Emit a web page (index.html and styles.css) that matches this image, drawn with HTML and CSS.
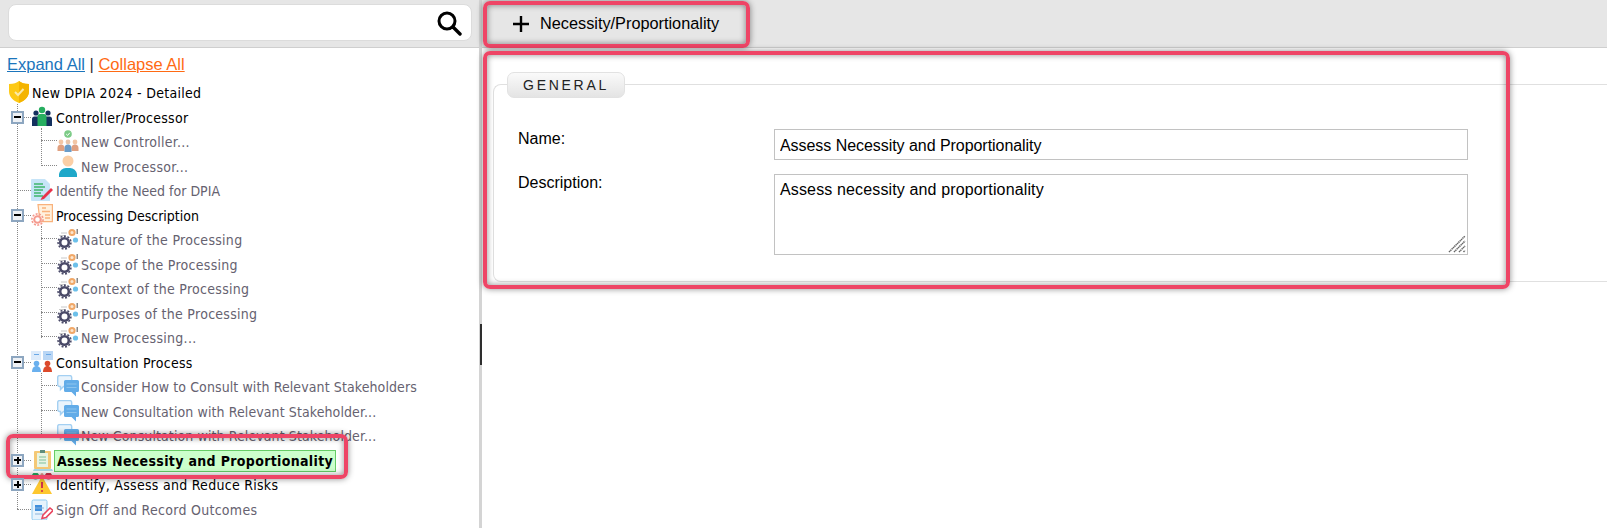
FILE: index.html
```html
<!DOCTYPE html>
<html lang="en">
<head>
<meta charset="utf-8">
<title>New DPIA 2024 - Detailed</title>
<link rel="stylesheet" href="styles.css">
</head>
<body>
<svg class="defs" width="0" height="0" aria-hidden="true">
  <defs>
    <symbol id="i-gear" viewBox="0 0 22 22">
      <circle cx="7.500" cy="14.500" r="4.300" fill="none" stroke="#4a4a68" stroke-width="2.600"/>
      <circle cx="7.500" cy="14.500" r="6.400" fill="none" stroke="#4a4a68" stroke-width="1.600" stroke-dasharray="2 1.600"/>
      <circle cx="15" cy="4.500" r="2.600" fill="#fbe6d0" stroke="#f0a868" stroke-width="2"/>
      <circle cx="18.500" cy="12" r="2.600" fill="#6cc0ea"/>
      <rect x="19.500" y="1" width="1.500" height="5" fill="#888"/>
      <path d="M4 5h6M2 7.500h5" stroke="#c8c8c8" stroke-width="1"/>
    </symbol>
    <symbol id="i-chat" viewBox="0 0 22 22">
      <path d="M.7 2.500a2 2 0 0 1 2-2h10a2 2 0 0 1 2 2v7a2 2 0 0 1-2 2H6.500l-3 3v-3h-.8a2 2 0 0 1-2-2z" fill="#eaf4fc" stroke="#a4d0f2" stroke-width="1.400"/>
      <path d="M7 6.500A1.500 1.500 0 0 1 8.500 5h12A1.500 1.500 0 0 1 22 6.500v9a1.500 1.500 0 0 1-1.500 1.500H19v4.500L14.500 17h-6A1.500 1.500 0 0 1 7 15.500z" fill="#62ace8"/>
      <path d="M9.500 9h10M9.500 12.500h10" stroke="#8cc4ee" stroke-width="1"/>
    </symbol>
  </defs>
</svg>

<div class="app">
  <aside class="side">
    <div class="searchbar">
      <div class="search">
        <svg class="lens" viewBox="0 0 26 26"><circle cx="11" cy="11" r="8" fill="none" stroke="#000" stroke-width="3"/><path d="M17 17l7 7" stroke="#000" stroke-width="3.400" stroke-linecap="round"/></svg>
      </div>
    </div>
    <div class="links"><a class="expand" href="#">Expand All</a> | <a class="collapse" href="#">Collapse All</a></div>
    <div class="tree">
      <div class="row root">
        <svg class="icon" viewBox="0 0 22 22"><path d="M11 0c2.500 2 5 3 10 3v7c0 6-4 9.500-10 12C5 19.500 1 16 1 10V3c5 0 7.500-1 10-3z" fill="#fdc915"/><path d="M11 0c2.500 2 5 3 10 3v7c0 6-4 9.500-10 12z" fill="#f4b400"/><path d="M7 11l3 3 5.500-6" fill="none" stroke="#fbe9a8" stroke-width="2"/></svg>
        <span class="label main">New DPIA 2024 - Detailed</span>
      </div>
      <div class="group top">
        <div class="row lvl1">
          <span class="exp minus"></span>
          <svg class="icon" viewBox="0 0 22 22"><circle cx="5" cy="7" r="2.600" fill="#14305e"/><circle cx="17" cy="7" r="2.600" fill="#14305e"/><path d="M1 20v-7a2.500 2.500 0 0 1 2.500-2.500h15A2.500 2.500 0 0 1 21 13v7z" fill="#14305e"/><circle cx="11" cy="4" r="3.200" fill="#27ae60"/><path d="M6.500 20v-9.500a2.500 2.500 0 0 1 2.500-2.500h4a2.500 2.500 0 0 1 2.500 2.500V20z" fill="#27ae60"/></svg>
          <span class="label main">Controller/Processor</span>
        </div>
        <div class="group sub">
          <div class="row lvl2">
            <svg class="icon" viewBox="0 0 22 22"><circle cx="11" cy="4" r="3.800" fill="#7ccb86"/><path d="M9.200 4l1.400 1.400 2.200-2.600" fill="none" stroke="#fff" stroke-width="1"/><circle cx="4" cy="12" r="2.400" fill="#f3c6a5"/><circle cx="11" cy="12" r="2.400" fill="#e8c4aa"/><circle cx="18" cy="12" r="2.400" fill="#f3c6a5"/><path d="M.5 21v-3a3.500 3.500 0 0 1 7 0v3z" fill="#e0a080"/><path d="M14.500 21v-3a3.500 3.500 0 0 1 7 0v3z" fill="#e0a080"/><path d="M7.500 22v-4a3.500 3.500 0 0 1 7 0v4z" fill="#6a9cc8"/></svg>
            <span class="label">New Controller...</span>
          </div>
          <div class="row lvl2">
            <svg class="icon" viewBox="0 0 22 22"><circle cx="11" cy="6" r="5.500" fill="#fbcfa6"/><path d="M2 22v-3a7 7 0 0 1 7-6h4a7 7 0 0 1 7 6v3z" fill="#1fa8c9"/></svg>
            <span class="label">New Processor...</span>
          </div>
        </div>
        <div class="row lvl1 leaf">
          <svg class="icon" viewBox="0 0 22 22"><path d="M0 1a1 1 0 0 1 1-1h13l5 5v17H1a1 1 0 0 1-1-1z" fill="#c6e4f8"/><path d="M3 5h9M3 8h11M3 11h9M3 14h7M3 17h9" stroke="#3fb56c" stroke-width="1.600"/><path d="M11 18l9-9 2 2-9 9-3.500 1z" fill="#e8324a"/></svg>
          <span class="label flat">Identify the Need for DPIA</span>
        </div>
        <div class="row lvl1">
          <span class="exp minus"></span>
          <svg class="icon" viewBox="0 0 22 22"><path d="M7 .6h14.400v17H9z" fill="#fff1de" stroke="#f9b27c" stroke-width="1.200"/><path d="M11 4h4M11 7.500h8M14 11h5M14 14h5" stroke="#f9b27c" stroke-width="1.300"/><circle cx="6.500" cy="15.500" r="3.300" fill="#fff" stroke="#f59a8e" stroke-width="2"/><circle cx="6.500" cy="15.500" r="5.600" fill="none" stroke="#f59a8e" stroke-width="1.600" stroke-dasharray="2 1.400"/></svg>
          <span class="label main flat">Processing Description</span>
        </div>
        <div class="group sub">
          <div class="row lvl2"><svg class="icon"><use href="#i-gear"/></svg><span class="label">Nature of the Processing</span></div>
          <div class="row lvl2"><svg class="icon"><use href="#i-gear"/></svg><span class="label">Scope of the Processing</span></div>
          <div class="row lvl2"><svg class="icon"><use href="#i-gear"/></svg><span class="label">Context of the Processing</span></div>
          <div class="row lvl2"><svg class="icon"><use href="#i-gear"/></svg><span class="label">Purposes of the Processing</span></div>
          <div class="row lvl2"><svg class="icon"><use href="#i-gear"/></svg><span class="label">New Processing...</span></div>
        </div>
        <div class="row lvl1">
          <span class="exp minus"></span>
          <svg class="icon" viewBox="0 0 22 22"><rect x="0" y="0" width="10" height="9" fill="#dcebfb"/><rect x="12" y="0" width="10" height="9" fill="#b9d6f5"/><path d="M3 3.500h5M15 3.500h5" stroke="#6aa8e6"/><circle cx="5.500" cy="12.500" r="2.800" fill="#6ab0ee"/><path d="M1 21c0-4 2-6 4.500-6S10 17 10 21z" fill="#6ab0ee"/><circle cx="16.500" cy="12.500" r="2.800" fill="#dc4a2c"/><path d="M12 21c0-4 2-6 4.500-6s4.500 2 4.500 6z" fill="#dc4a2c"/></svg>
          <span class="label main">Consultation Process</span>
        </div>
        <div class="group sub">
          <div class="row lvl2"><svg class="icon"><use href="#i-chat"/></svg><span class="label tight">Consider How to Consult with Relevant Stakeholders</span></div>
          <div class="row lvl2"><svg class="icon"><use href="#i-chat"/></svg><span class="label tight">New Consultation with Relevant Stakeholder...</span></div>
          <div class="row lvl2"><svg class="icon"><use href="#i-chat"/></svg><span class="label tight">New Consultation with Relevant Stakeholder...</span></div>
        </div>
        <div class="row lvl1">
          <span class="exp plus"></span>
          <svg class="icon" viewBox="0 0 22 22"><path d="M3 20h18l1 2H2z" fill="#a8d8ec"/><rect x="3" y="2" width="17" height="18" rx="1" fill="#f4c875"/><rect x="6" y="4" width="11" height="14" fill="#e8f4e4"/><rect x="9" y="1" width="5" height="3" fill="#5e8c7c"/><path d="M8 8h7M8 11h7M8 14h7" stroke="#7fbf9a"/></svg>
          <span class="label selected">Assess Necessity and Proportionality</span>
        </div>
        <div class="row lvl1">
          <span class="exp plus"></span>
          <svg class="icon" viewBox="0 0 22 22"><circle cx="4.500" cy="3" r="3.500" fill="#27ae60"/><circle cx="17.500" cy="3" r="3.500" fill="#d0344c"/><circle cx="11" cy="1.500" r="1.500" fill="#e8a090"/><path d="M11 3l10 18H1z" fill="#fdc72f"/><path d="M11 9v6" stroke="#d0344c" stroke-width="2"/><circle cx="11" cy="18" r="1.100" fill="#d0344c"/></svg>
          <span class="label main">Identify, Assess and Reduce Risks</span>
        </div>
        <div class="row lvl1 leaf">
          <svg class="icon" viewBox="0 0 22 22"><rect x="1" y="2" width="15" height="20" rx="1.500" fill="#e6f3fc" stroke="#8ccaf0"/><rect x="4" y="7" width="7" height="6" fill="#3f8fdc"/><path d="M4 16h8M4 10h9" stroke="#8ab4dc"/><path d="M12 17l7-7 3 2.500-7 7-4 1z" fill="#fff" stroke="#e8455f" stroke-width="1.600"/></svg>
          <span class="label">Sign Off and Record Outcomes</span>
        </div>
      </div>
    </div>
  </aside>

  <div class="splitter"><span class="handle"></span></div>

  <main class="content">
    <div class="toolbar">
      <button class="tool" type="button">
        <svg class="plus-icon" viewBox="0 0 18 18"><path d="M9 1v16M1 9h16" stroke="#000" stroke-width="2.400"/></svg>
        <span>Necessity/Proportionality</span>
      </button>
    </div>
    <section class="fieldset">
      <h2 class="legend">GENERAL</h2>
      <div class="form">
        <label class="flabel" for="f-name">Name:</label>
        <input class="field name" id="f-name" type="text" value="Assess Necessity and Proportionality">
        <label class="flabel desc" for="f-desc">Description:</label>
        <div class="areawrap">
          <textarea class="field area" id="f-desc">Assess necessity and proportionality</textarea>
          <svg class="grip" viewBox="0 0 18 18"><path d="M1 17L17 1M6 17L17 6M11 17l6-6M15.500 17l1.500-1.500" stroke="#666" stroke-width="1.500" stroke-dasharray="1.400 .5"/></svg>
        </div>
      </div>
    </section>
  </main>
</div>

<div class="mark mark-tool"></div>
<div class="mark mark-form"></div>
<div class="mark mark-node"></div>
</body>
</html>
```
FILE: styles.css
```css
* { box-sizing: border-box; }
html, body { margin: 0; height: 100%; overflow: hidden; background: #fff; }
body { position: relative; font-family: "Liberation Sans", Arial, sans-serif; color: #000; }
.defs { position: absolute; }

.app { display: flex; height: 528px; }
.side { width: 479px; flex: none; overflow: hidden; }
.splitter { width: 3px; flex: none; background: #d4d4d4; position: relative; }
.handle { position: absolute; left: 1px; top: 324px; width: 2px; height: 41px; background: #2e2e2e; }
.content { flex: 1; min-width: 0; }

.searchbar { height: 48px; background: #e6e6e6; border-bottom: 1px solid #cfcfcf; padding: 4px 7px 0 8px; }
.search { height: 37px; background: #fff; border: 1px solid #dcdcdc; border-radius: 8px; display: flex; align-items: center; justify-content: flex-end; padding-right: 9px; }
.lens { width: 26px; height: 26px; }

.links { font-size: 16.5px; line-height: 18px; padding: 7px 0 0 7px; height: 32px; color: #333; }
.expand { color: #1b75bc; }
.collapse { color: #ff6a13; }

.tree { font-family: "DejaVu Sans Condensed", "DejaVu Sans", Tahoma, sans-serif; font-stretch: condensed; font-size: 14px; padding-left: 8px; }
.row { display: flex; align-items: center; height: 24.5px; position: relative; white-space: nowrap; }
.icon { width: 22px; height: 22px; flex: none; }
.label { color: #666270; margin: 2px 0 0 2px; letter-spacing: .28px; }
.lvl1 > .label { margin-left: 3px; }
.label.main { color: #000; }
.label.tight { letter-spacing: .1px; }
.label.flat { letter-spacing: 0; }
.lvl1 > .label.selected { color: #000; font-weight: 700; letter-spacing: .34px; background: #ccffcc; border: 1px solid #66cc66; margin: 2px 0 0 1px; padding: 0 2px; line-height: 20px; }

.group { position: relative; }
.group::before { content: ""; position: absolute; left: 0; top: -1px; bottom: 12px; border-left: 1px dotted #888; }
.group.top { margin-left: 9px; }
.group.top > .lvl1 { padding-left: 14px; }
.group.top > .lvl1::before { content: ""; position: absolute; left: 0; width: 14px; top: 12px; border-top: 1px dotted #888; }
.group.sub { margin-left: 24px; }
.group.sub .lvl2 { padding-left: 16px; }
.group.sub .lvl2::before { content: ""; position: absolute; left: 0; width: 16px; top: 11px; border-top: 1px dotted #888; }

.exp { position: absolute; z-index: 1; left: -6px; top: 6px; width: 13px; height: 13px; background: #eef1f5; border: 2px solid #8da6c0; }
.exp::before { content: ""; position: absolute; left: 1px; right: 1px; top: 3.500px; height: 2px; background: #000; }
.exp.plus::after { content: ""; position: absolute; top: 1px; bottom: 1px; left: 3.500px; width: 2px; background: #000; }

.toolbar { height: 48px; background: #e6e6e6; border-bottom: 1px solid #cfcfcf; padding-left: 2px; display: flex; }
.tool { display: flex; align-items: center; gap: 10px; height: 47px; width: 266px; background: #e6e6e6; border: 0; padding: 0 0 0 28px; font: 16.300px "Liberation Sans", Arial, sans-serif; color: #000; }
.plus-icon { width: 18px; height: 18px; }

.fieldset { position: relative; margin: 36px 0 0 11px; height: 198px; border: 1px solid #e0e0e0; border-right: 0; border-radius: 8px 0 0 8px; padding: 44px 0 0 24px; }
.legend { position: absolute; left: 13px; top: -13px; margin: 0; width: 118px; height: 26px; border: 1px solid #e2e2e2; border-radius: 7px; background: linear-gradient(#fafafa, #e4e4e4); font-size: 14px; font-weight: 400; letter-spacing: 2.700px; line-height: 25px; text-align: center; color: #222; }
.form { display: grid; grid-template-columns: 256px 694px; grid-template-rows: 31px 81px; row-gap: 14px; font-size: 16px; }
.flabel { line-height: 18px; padding-top: 1px; }
.flabel.desc { padding-top: 0; }
.field { display: block; width: 100%; height: 100%; border: 1px solid #c2c2c2; border-radius: 0; padding: 6px 5px 4px; font: 16px "Liberation Sans", Arial, sans-serif; color: #000; background: #fff; outline: 0; }
.field.name { letter-spacing: -.05px; }
.area { resize: none; padding-top: 6px; letter-spacing: .14px; }
.areawrap { position: relative; }
.grip { position: absolute; right: 2px; bottom: 2px; width: 18px; height: 18px; }

.mark { position: absolute; border: 4px solid #ee4566; border-radius: 7px; box-shadow: 0 0 6px rgba(0,0,0,.45), inset 0 0 6px rgba(0,0,0,.45); pointer-events: none; }
.mark-tool { left: 483px; top: 1px; width: 267px; height: 47px; }
.mark-form { left: 483px; top: 51px; width: 1027px; height: 238px; }
.mark-node { left: 6px; top: 434px; width: 342px; height: 45px; }
```
